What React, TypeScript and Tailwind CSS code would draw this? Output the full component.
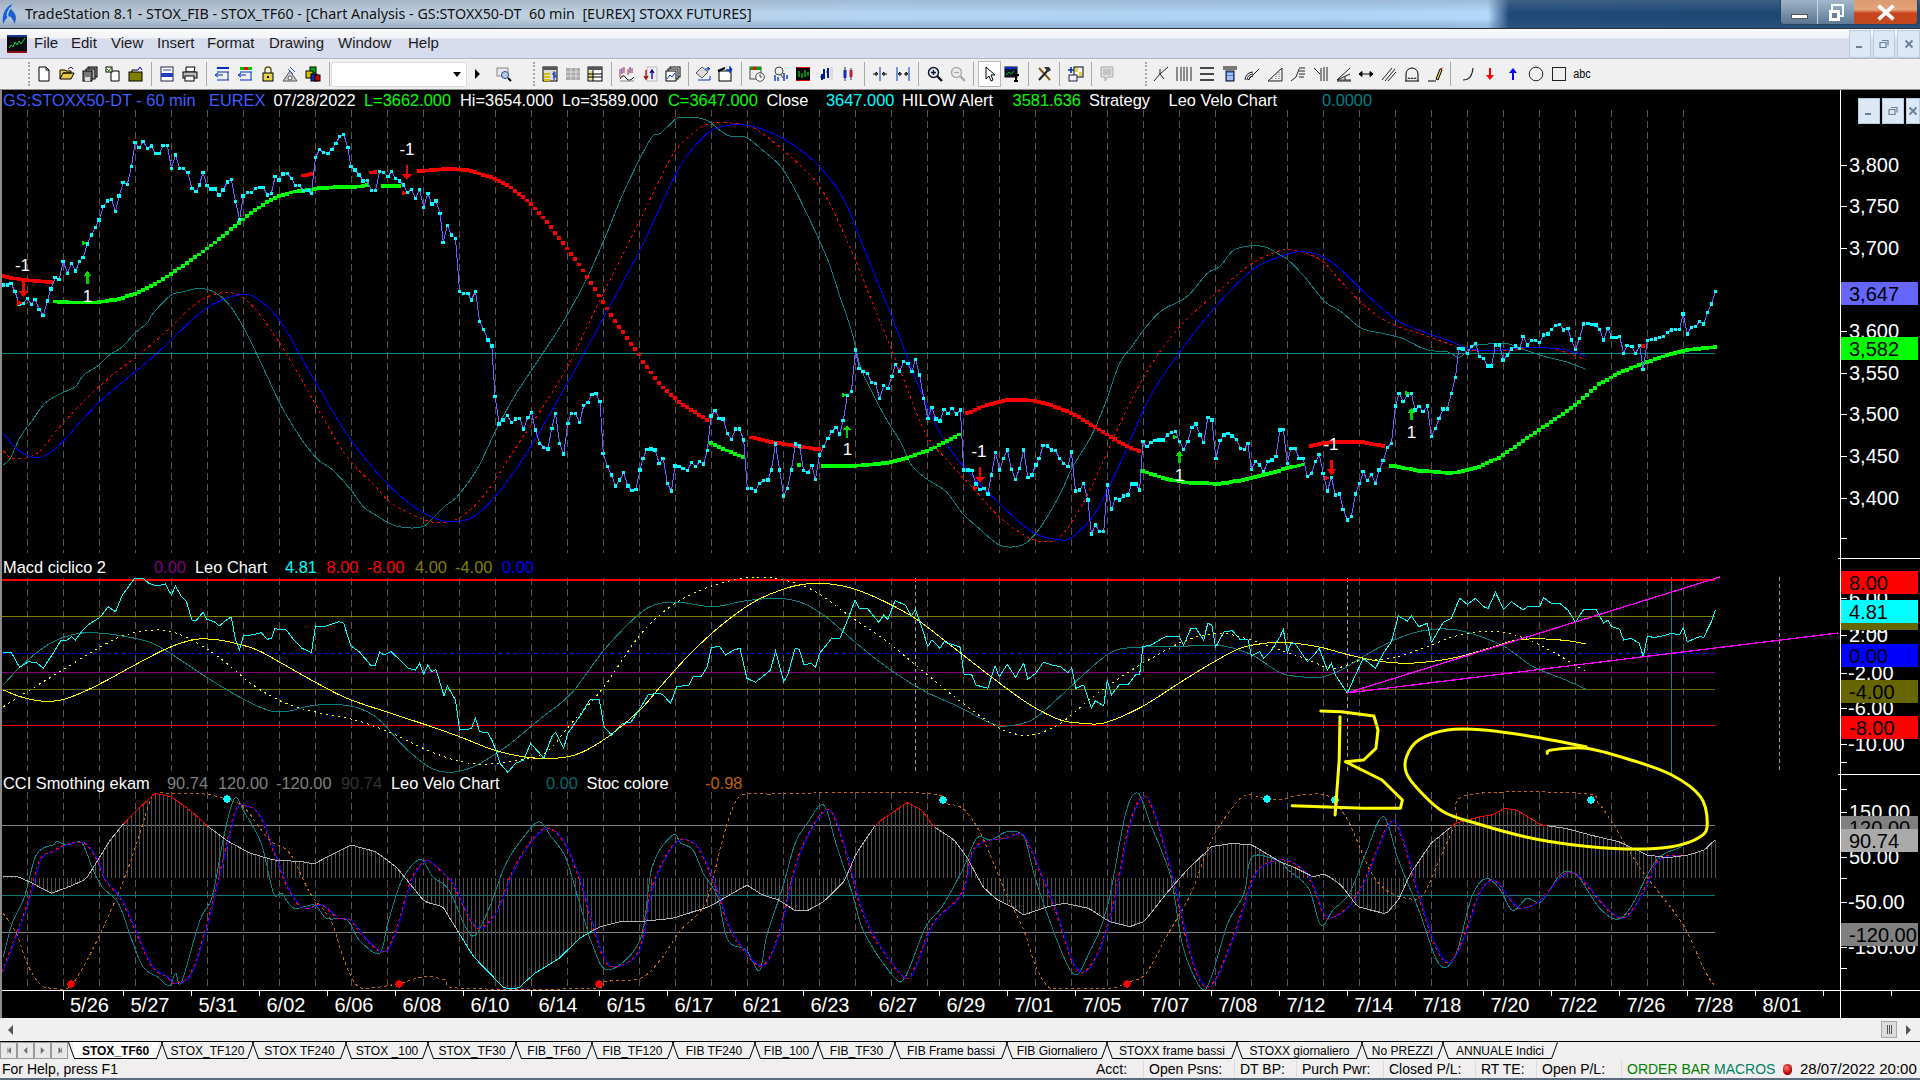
import React from "react";

type Pt = [number, number];
const P = (ox: number, oy: number, s: string): Pt[] =>
  s.trim().split(/\s+/).map((p) => {
    const [a, b] = p.split(",").map(Number);
    return [ox + a / 2.45, oy + b / 3] as Pt;
  });
const L = (pts: Pt[]) => pts.map((p) => p[0].toFixed(1) + "," + p[1].toFixed(1)).join(" ");
const smooth = (pts: Pt[]) => {
  let d = `M${pts[0][0].toFixed(1)} ${pts[0][1].toFixed(1)}`;
  for (let i = 0; i < pts.length - 1; i++) {
    const p0 = pts[Math.max(0, i - 1)], p1 = pts[i], p2 = pts[i + 1], p3 = pts[Math.min(pts.length - 1, i + 2)];
    const c1x = p1[0] + (p2[0] - p0[0]) / 6, c1y = p1[1] + (p2[1] - p0[1]) / 6;
    const c2x = p2[0] - (p3[0] - p1[0]) / 6, c2y = p2[1] - (p3[1] - p1[1]) / 6;
    d += `C${c1x.toFixed(1)} ${c1y.toFixed(1)} ${c2x.toFixed(1)} ${c2y.toFixed(1)} ${p2[0].toFixed(1)} ${p2[1].toFixed(1)}`;
  }
  return d;
};
const interp = (pts: Pt[], x: number) => {
  if (x <= pts[0][0]) return pts[0][1];
  for (let i = 0; i < pts.length - 1; i++) {
    if (x <= pts[i + 1][0]) {
      const t = (x - pts[i][0]) / Math.max(0.001, pts[i + 1][0] - pts[i][0]);
      return pts[i][1] + (pts[i + 1][1] - pts[i][1]) * t;
    }
  }
  return pts[pts.length - 1][1];
};
const grid = (x: number) => 3.3 + 4 * Math.ceil((x - 3.3) / 4);
const squares = (keys: Pt[]) => {
  const out: Pt[] = [];
  const end = keys[keys.length - 1][0];
  for (let x = grid(keys[0][0]); x <= end + 0.5; x += 4) out.push([x, interp(keys, x)]);
  return out;
};

const price: Pt[] = [
  ...P(0, 120, "8,495 18,495 27,490 37,515 47,553 57,550 67,535 77,554 86,538 96,568 106,586 116,543 125,507 135,473 145,478 155,424 165,460 175,430 185,453 195,425 204,412 214,372 224,345 234,322 243,300 253,260 263,243 273,238 283,274 292,228 302,188 312,194 322,140 331,68 341,82 351,65 361,85 371,78 381,100 390,100 400,76 410,76 420,145 430,105 440,145 450,145 460,158 470,205 480,215 489,195 497,157 507,197 517,207 527,207 537,225 547,210 557,186 567,178 577,245 587,298 596,228 606,218 616,218 626,205 636,202 645,202 655,225 665,220 674,170 684,180 694,162 704,160 714,175 724,197 734,197 744,212 754,212 763,220 773,113 783,88 793,98 803,100 813,88 823,70 832,50 842,43 852,82 860,140 870,150 880,165 890,183 900,182 910,212 920,212 930,155 940,157 950,170 959,155 969,175 979,183 989,195 998,218 1008,209 1018,235 1028,209 1038,262 1048,220 1058,252 1068,243 1078,280 1086,367 1096,316 1106,345 1116,355 1126,515 1136,520 1146,520 1155,540 1165,514 1175,604 1185,628 1195,660 1205,678 1213,830 1223,912 1233,900 1243,887 1253,907 1263,897 1273,895 1283,927 1293,892 1302,878 1312,930 1322,970 1332,982 1342,987 1352,925 1361,880 1371,970 1381,1002 1391,910 1400,880 1410,880 1420,907 1430,857 1440,848 1450,823 1460,820 1470,845 1478,1000 1488,1040 1498,1065 1508,1098 1518,1080 1528,1058 1538,1098 1548,1112 1558,1108"),
  ...P(640, 120, "0,1050 7,1015 17,988 27,987 37,990 47,1030 57,1015 67,1090 77,1113 86,1038 96,1040 106,1045 116,1052 126,1028 136,1040 146,1025 156,1032 165,992 174,888 184,872 194,895 204,897 214,940 224,958 234,927 244,927 254,960 263,1105 273,1105 283,1113 293,1090 303,1082 313,1080 322,1050 332,972 342,1050 352,1128 361,1105 371,1050 381,972 391,978 401,1052 411,1058 421,1037 430,1078 440,1005 450,980 460,955 470,935 480,922 489,942 498,902 508,827 518,815 528,690 537,745 547,755 557,760 567,788 577,790 587,835 597,797 607,805 617,770 626,733 636,755 646,725 656,730 666,755 675,718 685,765 695,835 705,895 715,862 725,897 735,903 745,868 755,880 765,866 775,882 785,870 793,1050 803,1050 813,1052 823,1092 833,1108 843,1105 852,1122 861,1065 871,998 881,1050 891,1015 900,990 910,1048 920,1078 930,1045 940,990 950,1072 960,1065 970,1035 978,1015 988,976 998,978 1008,990 1018,992 1028,1015 1038,1030 1048,1040 1057,996 1067,1113 1077,1110 1087,1090 1097,1140 1106,1242 1116,1215 1126,1235 1136,1235 1145,1095 1155,1167 1165,1135 1175,1140 1185,1128 1195,1125 1205,1092 1215,1092 1224,1110 1232,965 1242,980 1252,968 1262,962 1272,960 1282,960 1292,945 1302,938 1312,935 1322,965 1332,988 1342,965 1352,922 1362,912 1372,945 1381,968 1391,893 1401,900 1411,1015 1421,962 1431,945 1441,940 1451,948 1461,958 1471,985 1481,988 1489,970 1498,1048 1508,1025 1518,1035 1528,1055 1538,1025 1548,1020 1558,1010"),
  ...P(1280, 120, "0,930 8,928 18,1030 27,985 37,985 47,1015 57,1015 67,1070 77,1060 87,1025 96,1003 106,1060 116,1113 126,1073 136,1125 146,1122 155,1168 165,1200 175,1190 185,1122 195,1090 204,1055 214,1082 224,1063 234,1090 243,1050 253,1022 263,982 273,970 283,858 292,820 302,845 312,825 322,820 331,870 341,860 351,875 361,858 371,950 381,925 390,895 400,867 410,867 420,820 430,772 438,685 448,687 459,700 469,680 479,670 489,710 499,715 509,738 518,738 528,675 538,675 547,720 557,705 567,687 577,678 587,685 596,650 606,675 616,662 626,662 636,668 646,645 656,642 665,628 675,617 685,613 695,630 705,625 714,660 724,688 734,655 744,612 754,610 764,613 774,615 783,628 793,660 803,625 813,652 823,652 832,650 842,700 850,677 862,680 871,700 881,677 890,748 900,662 910,658 920,657 930,652 940,650 949,637 959,630 969,628 979,628 988,582 998,642 1008,622 1018,620 1028,605 1038,612 1047,578 1057,552 1067,515"),
];

const redStops: Pt[][] = [
  P(0, 120, "8,468 27,474 57,480 97,484 127,486"),
  P(0, 120, "742,167 765,163"),
  P(0, 120, "905,158 925,157"),
  [...P(0, 120, "1018,155 1060,150 1110,147 1150,152 1200,170 1250,200 1300,250 1340,305 1380,370 1420,435 1460,510 1500,590 1540,660 1567,705"), ...P(640, 120, "0,712 50,795 100,850 165,900")],
  P(640, 120, "263,950 300,960 350,972 395,980 440,988"),
  P(640, 120, "793,885 850,855 900,840 950,840 1000,852 1060,880 1120,925 1180,970 1225,995"),
  P(1280, 120, "67,982 100,970 150,965 200,966 260,980"),
  P(1280, 120, "887,678 893,678"),
];
const greenStops: Pt[][] = [
  P(0, 120, "135,545 175,548 235,548 290,538 330,522 370,500 420,462 470,420 520,375 570,325 620,275 670,235 720,215 765,210 780,204 880,200 903,195"),
  P(0, 120, "930,198 985,198"),
  P(640, 120, "174,970 210,990 254,1012"),
  P(640, 120, "381,1035 391,1035"),
  P(640, 120, "448,1038 540,1037 600,1030 660,1012 720,985 785,942"),
  [...P(640, 120, "1232,1053 1290,1077 1340,1088 1420,1092 1480,1080 1567,1052"), ...P(1280, 120, "2,1050 60,1033")],
  P(1280, 120, "272,1037 340,1052 420,1060 480,1045 540,1012 600,960 660,910 720,860 780,795 830,760 880,735 950,705 1010,688 1067,682"),
];

const tealMA: Pt[] = [
  ...P(0, 120, "8,1035 25,1015 50,950 80,900 110,850 150,820 185,800 205,765 240,737 270,703 300,680 330,640 360,610 375,580 420,525 450,515 490,505 530,520 565,560 600,630 640,730 690,860 740,960 780,1020 815,1050 860,1110 890,1160 920,1185 970,1218 1030,1222 1060,1195 1090,1158 1120,1130 1170,1045 1215,930 1265,820 1330,700 1385,595 1440,470 1490,330 1525,225"),
  ...P(640, 120, "0,115 30,50 50,40 85,0 100,-8 150,-5 175,10 200,35 225,50 260,52 300,90 345,140 380,210 420,310 460,420 490,530 520,640 540,740 570,820 600,890 640,970 665,1035 700,1075 750,1115 790,1180 830,1225 880,1275 920,1280 950,1265 985,1215 1030,1120 1060,1040 1105,950 1140,850 1175,730 1205,680 1240,620 1280,570 1340,530 1390,460 1420,440 1450,395 1480,380 1530,380"),
  ...P(1280, 120, "0,405 20,420 60,470 110,545 150,575 200,625 250,640 300,655 340,680 370,692 410,695 440,712 470,680 510,672 560,672 600,690 650,710 700,725 750,748"),
];
const redMA: Pt[] = [
  ...P(0, 120, "8,992 30,1015 70,1012 100,990 140,930 200,850 270,770 340,705 420,620 470,560 520,525 570,520 620,560 680,660 730,760 790,890 850,1010 920,1100 960,1150 1030,1195 1080,1208 1130,1190 1190,1120 1260,990 1320,880 1390,740 1470,540"),
  ...P(640, 120, "0,300 40,200 85,95 140,30 175,10 230,10 280,25 350,90 440,200 510,370 580,580 640,760 700,940 760,1030 820,1110 880,1190 940,1245 985,1265 1030,1250 1090,1140 1140,1010 1200,850 1260,720 1330,610 1420,510 1500,430"),
  ...P(1280, 120, "0,392 40,392 100,420 150,485 210,560 270,610 340,640 410,670 460,690 560,692 620,682 680,690 750,720"),
];
const blueMA: Pt[] = [
  ...P(0, 120, "8,940 40,985 70,1008 105,1010 150,970 240,850 380,705 500,570 590,523 640,545 690,610 770,780 860,960 960,1105 1040,1180 1100,1205 1160,1190 1220,1120 1300,980 1390,790 1480,590"),
  ...P(640, 120, "0,390 50,260 100,135 160,45 200,20 250,14 300,28 370,70 440,140 500,240 560,420 620,600 680,790 740,950 800,1050 880,1150 960,1235 1020,1258 1060,1250 1120,1170 1180,1020 1250,830 1320,700 1410,560 1500,450"),
  ...P(1280, 120, "0,410 50,395 105,410 150,450 200,510 280,595 340,630 420,665 460,685 520,692 600,683 650,683 700,690 750,708"),
];

const macdCyan: Pt[] = [
  ...P(0, 560, "8,278 28,278 48,322 70,305 90,308 106,325 130,280 150,240 165,240 175,230 185,240 200,215 215,195 245,172 265,140 283,155 300,105 330,55 350,55 365,70 385,78 405,72 420,105 430,78 445,110 457,125 470,180 480,183 497,157 507,178 525,185 537,198 560,175 567,172 577,240 587,270 596,228 616,225 640,218 655,238 665,235 674,205 684,210 700,208 720,240 740,265 763,278 773,198 793,200 830,185 842,190 860,258 880,275 910,318 920,315 930,275 940,285 958,275 980,300 1000,325 1018,330 1028,310 1038,343 1048,315 1058,335 1068,328 1088,408 1096,378 1116,420 1126,510 1146,508 1155,505 1165,475 1175,515 1195,518 1205,540 1215,570 1225,610 1244,637 1263,610 1283,600 1300,550 1322,580 1332,595 1352,530 1361,517 1381,565 1391,520 1420,470 1445,420 1468,418 1480,500 1498,525 1525,490 1545,488"),
  ...P(640, 560, "0,445 20,405 40,400 55,403 75,430 90,380 120,375 130,350 150,350 165,320 175,262 195,260 210,285 230,270 245,265 262,355 283,367 320,330 332,272 352,365 362,345 380,265 390,268 402,315 420,310 430,322 440,280 470,235 490,235 510,175 527,120 537,145 557,145 570,165 585,187 597,165 607,178 625,122 650,135 665,168 675,148 695,220 705,260 715,240 735,265 745,245 785,262 793,342 813,345 823,375 852,385 870,318 880,350 900,313 920,352 940,310 950,358 970,340 988,307 1010,315 1030,320 1048,338 1058,323 1068,385 1087,375 1106,445 1116,422 1136,438 1145,360 1155,405 1175,373 1195,375 1215,343 1224,345 1232,260 1252,255 1290,228 1320,228 1332,255 1350,205 1362,205 1381,240 1391,190 1401,195 1410,262 1431,215 1451,212 1470,238 1490,240 1498,288 1518,275 1528,295 1548,270"),
  ...P(1280, 560, "0,230 8,208 18,278 27,250 37,250 67,305 87,280 96,265 116,330 126,310 136,345 165,400 185,345 204,295 224,315 234,325 253,280 273,245 290,168 312,183 322,168 340,200 361,190 371,248 400,187 420,175 440,115 459,133 479,115 499,140 510,145 528,97 548,148 567,125 596,150 606,140 636,140 646,113 665,130 685,130 705,150 724,187 744,148 774,148 793,190 803,180 813,200 832,208 842,240 860,235 880,250 890,290 900,230 920,232 940,227 958,220 979,225 988,203 998,245 1028,230 1038,232 1057,185 1067,150"),
];
const macdYellow: Pt[] = [
  ...P(0, 560, "8,390 50,410 100,423 150,420 200,398 260,362 330,315 410,265 470,240 510,237 560,245 630,270 690,310 770,365 850,415 950,457 1050,497 1130,532 1210,570 1290,592 1360,595 1420,580 1490,530"),
  ...P(640, 560, "0,450 50,380 120,285 200,195 280,125 350,88 400,73 450,70 520,85 600,125 680,180 760,255 860,350 950,430 1030,480 1090,490 1140,488 1230,440 1320,370 1400,310 1470,265 1530,250"),
  ...P(1280, 560, "0,247 40,250 100,262 170,285 240,303 310,310 380,303 440,290 520,262 580,240 650,237 710,243 750,252"),
];
const macdDot: Pt[] = [
  ...P(0, 560, "8,440 80,385 160,325 240,265 300,228 360,212 410,212 470,240 540,295 620,375 700,430 780,458 870,480 960,520 1050,572 1130,605 1200,612 1280,598 1340,575 1400,490 1480,380"),
  ...P(640, 560, "0,225 80,135 160,85 240,57 300,52 360,62 430,95 510,165 600,240 690,330 770,410 860,490 920,522 970,522 1030,490 1100,420 1180,350 1260,290 1340,240 1420,220 1490,238"),
  ...P(1280, 560, "0,270 60,295 130,325 200,300 270,295 350,265 440,225 530,215 600,235 660,270 710,305 750,335"),
];
const macdTeal: Pt[] = [
  ...P(0, 560, "8,375 50,320 110,260 160,230 220,218 300,228 370,248 430,290 510,355 600,420 660,452 700,455 760,438 820,433 880,445 930,480 990,560 1050,620 1100,637 1160,620 1240,560 1320,480 1400,400 1480,270"),
  ...P(640, 560, "0,160 50,130 100,127 180,140 260,122 340,115 400,130 460,175 540,260 620,335 700,395 780,440 860,490 900,498 960,480 1020,420 1090,340 1150,280 1200,263 1300,260 1370,257 1430,258 1500,285"),
  ...P(1280, 560, "0,338 50,350 100,352 150,330 210,285 280,240 350,212 420,208 480,225 550,260 620,320 700,360 750,388"),
];

const orange: Pt[] = [
  ...P(0, 560, "8,1060 40,1120 70,1220 100,1275 130,1285 165,1285 200,1230 250,1110 300,970 340,830 370,715 385,700 420,700 500,702 560,720 600,745 660,840 710,880 760,1000 810,1080 840,1190 870,1270 900,1285 980,1270 1040,1250 1090,1260 1130,1285 1450,1285 1480,1265"),
  ...P(640, 560, "0,1255 50,1200 100,1110 160,1030 200,850 225,750 250,705 300,700 320,705 350,700 700,700 750,730 790,745 830,810 870,920 900,1010 940,1110 970,1220 1000,1280 1030,1285 1150,1285 1200,1265 1240,1240 1290,1130 1350,1000 1400,840 1460,730 1490,705 1530,715"),
  ...P(1280, 560, "0,718 50,705 100,703 130,720 170,790 220,930 260,990 310,1015 350,1005 390,900 430,790 460,705 740,700 780,730 820,800 880,920 930,1000 990,1100 1040,1230 1065,1278"),
];
const cciGray: Pt[] = [
  ...P(0, 560, "8,948 40,948 80,970 125,1000 170,980 210,958 240,900 270,840 300,795 340,745 380,700 420,710 470,755 510,800 560,845 610,878 670,900 740,905 770,912 810,885 860,855 920,875 970,920 1000,965 1040,1025 1085,1040 1120,1110 1160,1190 1200,1240 1235,1285 1270,1285 1310,1240 1370,1195 1420,1135 1470,1100 1520,1085"),
  ...P(640, 560, "0,1085 80,1075 170,1040 262,975 300,1005 340,1020 380,1052 410,1052 450,1025 500,965 530,880 580,790 655,727 690,750 720,800 770,840 800,890 840,980 870,1015 910,1040 940,1065 1000,1040 1040,1030 1100,1045 1150,1085 1200,1100 1235,1085 1290,1000 1340,930 1400,860 1450,850 1500,855"),
  ...P(1280, 560, "0,905 40,925 80,950 110,942 150,975 190,1040 260,1062 290,1020 320,940 370,850 430,790 490,770 520,765 550,745 580,750 640,795 700,805 760,825 830,845 900,885 950,893 1000,885 1040,870 1067,838"),
];
const ccBlue: Pt[] = [
  ...P(0, 560, "8,1235 40,1130 70,1030 100,900 130,875 170,852 210,850 240,900 260,960 300,1020 340,1130 375,1220 410,1250 430,1270 470,1240 510,1090 545,920 580,750 610,740 640,770 680,900 710,990 745,1045 790,1035 830,1075 860,1080 900,1140 945,1175 975,1100 1010,960 1040,905 1060,910 1110,970 1150,1070 1180,1105 1220,1050 1260,930 1300,850 1340,805 1380,840 1420,950 1450,1080 1480,1190 1510,1220"),
  ...P(640, 560, "0,1170 30,990 65,890 100,840 145,865 190,990 220,1100 250,1160 300,1218 340,1130 380,930 420,810 465,750 500,850 540,1030 580,1140 650,1253 680,1210 720,1090 790,1000 815,880 845,845 900,835 940,825 980,930 1020,1050 1070,1225 1115,1200 1160,1040 1200,800 1235,710 1265,770 1310,970 1350,1180 1385,1278 1420,1240 1470,1080 1510,940"),
  ...P(1280, 560, "0,900 50,920 80,970 110,1065 130,1072 170,1040 210,960 270,790 300,830 340,1000 380,1150 415,1208 450,1140 490,1000 525,960 560,1010 590,1045 640,1020 690,950 725,940 770,1000 815,1060 850,1070 890,1000 930,900 985,885"),
];
const ccTeal: Pt[] = [
  ...P(0, 560, "8,1190 30,1090 60,1010 85,895 105,865 130,855 140,845 165,855 200,848 225,920 250,980 290,1030 320,1130 350,1220 385,1250 415,1278 430,1240 445,1265 490,1080 520,1010 550,820 575,715 600,760 640,850 670,1000 690,1000 720,1045 770,1035 800,1075 850,1080 880,1140 930,1180 950,1090 985,960 1030,898 1060,950 1100,990 1140,1100 1165,1125 1200,1040 1240,910 1290,820 1322,785 1350,830 1385,890 1420,1030 1450,1150 1490,1230"),
  ...P(640, 560, "0,1140 30,920 80,825 100,850 130,870 155,940 190,1010 215,1140 260,1170 293,1232 310,1130 350,980 380,850 410,790 450,735 480,850 520,1000 550,1120 620,1248 650,1250 700,1100 740,1040 790,930 825,835 860,840 900,815 940,830 965,940 1000,1070 1060,1240 1100,1180 1145,1040 1190,760 1220,700 1250,790 1300,950 1330,1160 1375,1285 1400,1250 1440,1090 1480,1000 1500,890"),
  ...P(1280, 560, "0,905 20,930 70,985 100,1095 130,1050 170,1000 210,880 253,770 290,900 340,1050 390,1213 430,1185 470,1010 505,955 540,990 570,1052 605,1015 640,1025 690,940 730,950 780,1040 825,1078 860,1040 900,945 930,890 985,860"),
];
const R1 = P(1280, 560, "100,453 150,455 230,468 240,510 235,565 205,600 160,605 250,660 300,720 295,745 205,745 30,737");
const R2 = P(1280, 560, "147,470 145,600 135,765");
const R3 = P(1280, 560, "655,580 665,570 750,565 860,600 960,645 1030,710 1047,790 1030,830 960,860 850,867 720,855 600,830 480,790 400,755 340,690 310,640 310,590 340,540 410,510 500,510 620,530 750,560");

const vGrid: number[] = Array.from({ length: 47 }, (_, k) => 27.4 + 36 * k);
const hist: Pt[] = (() => {
  const o: Pt[] = [];
  for (let x = 3.3; x <= 1716; x += 4) o.push([x, interp(cciGray, x)]);
  return o;
})();
const cciSegs = (() => {
  const segs: { c: string; pts: Pt[] }[] = [];
  const col = (y: number) => (y < 825.7 ? "#ff0000" : y > 932 ? "#00ffff" : "#b4b4b4");
  for (let i = 0; i < hist.length - 1; i++) {
    const c = col((hist[i][1] + hist[i + 1][1]) / 2);
    const last = segs[segs.length - 1];
    if (last && last.c === c) last.pts.push(hist[i + 1]);
    else segs.push({ c, pts: [hist[i], hist[i + 1]] });
  }
  return segs;
})();

const DownA = ({ x, y1, y2 }: { x: number; y1: number; y2: number }) => (
  <g>
    <line x1={x} x2={x} y1={y1} y2={y2 - 4} stroke="#ff0000" strokeWidth={2.6} />
    <polygon points={`${x - 5},${y2 - 6} ${x + 5},${y2 - 6} ${x},${y2}`} fill="#ff0000" />
  </g>
);
const UpA = ({ x, y1, y2 }: { x: number; y1: number; y2: number }) => (
  <g>
    <line x1={x} x2={x} y1={y1} y2={y2 + 4} stroke="#00d000" strokeWidth={2.4} />
    <polygon points={`${x - 4},${y2 + 5} ${x + 4},${y2 + 5} ${x},${y2}`} fill="#00e000" />
  </g>
);
const Tri = ({ x, y, c }: { x: number; y: number; c: string }) => (
  <polygon points={`${x - 2.5},${y - 3} ${x + 3},${y} ${x - 2.5},${y + 3}`} fill={c} />
);
const Num = ({ x, y, t }: { x: number; y: number; t: string }) => (
  <text x={x} y={y + 6} textAnchor="middle" fontSize={17} fill="#fff">{t}</text>
);

const axisLabels: [number, string][] = [
  [165, "3,800"], [206, "3,750"], [248, "3,700"], [331, "3,600"], [373, "3,550"], [414, "3,500"], [456, "3,450"], [498, "3,400"],
  [598, "6.00"], [626, "4.00"], [635, "2.00"], [673, "-2.00"], [708, "-6.00"], [744, "-10.00"],
  [812, "150.00"], [857, "50.00"], [902, "-50.00"], [947, "-150.00"],
];
const axisTicks = [165, 206, 248, 290, 331, 373, 414, 456, 498, 538, 598, 635, 673, 708, 744, 762, 789, 812, 857, 878, 902, 947, 968];
const boxes: [number, string, string][] = [
  [282, "#6666ff", "3,647"], [337, "#00ff00", "3,582"], [571, "#ff0000", "8.00"], [607, "#666600", ""], [600, "#00ffff", "4.81"], [644, "#0000ff", "0.00"], [680, "#666600", "-4.00"], [716, "#ff0000", "-8.00"],
  [816, "#808080", "120.00"], [829, "#aaaaaa", "90.74"], [923, "#808080", "-120.00"],
];

function ChartSvg() {
  return (
    <svg viewBox="0 89 1920 929" className="absolute inset-0 w-[1920px] h-[929px]" shapeRendering="crispEdges">
      <g stroke="#565656" strokeDasharray="7 4">
        {vGrid.map((x) => <line key={"a" + x} x1={x} x2={x} y1={110} y2={553} />)}
        {vGrid.map((x) => <line key={"b" + x} x1={x} x2={x} y1={578} y2={771} />)}
        {vGrid.map((x) => <line key={"c" + x} x1={x} x2={x} y1={792} y2={988} />)}
      </g>
      <g stroke="#9a9a9a" strokeDasharray="4 3">
        <line x1={915.5} x2={915.5} y1={578} y2={771} />
        <line x1={1347.5} x2={1347.5} y1={578} y2={771} />
        <line x1={1779.5} x2={1779.5} y1={577} y2={770} />
      </g>
      <line x1={1671.5} x2={1671.5} y1={577} y2={775} stroke="#0a8a8a" />
      <g fill="none">
        <line x1={2} x2={1715} y1={353.5} y2={353.5} stroke="#0a8a8a" />
        <line x1={2} x2={1715} y1={580} y2={580} stroke="#ff0000" strokeWidth={2} />
        <line x1={2} x2={1715} y1={616.5} y2={616.5} stroke="#808000" />
        <line x1={2} x2={1715} y1={653.5} y2={653.5} stroke="#0000ff" strokeDasharray="4 3" />
        <line x1={2} x2={1715} y1={672.5} y2={672.5} stroke="#800080" />
        <line x1={2} x2={1715} y1={689.5} y2={689.5} stroke="#666600" />
        <line x1={2} x2={1715} y1={725.5} y2={725.5} stroke="#ff0000" />
        <line x1={2} x2={1715} y1={825.5} y2={825.5} stroke="#808080" />
        <line x1={2} x2={1715} y1={895.5} y2={895.5} stroke="#0a7a7a" />
        <line x1={2} x2={1715} y1={932.5} y2={932.5} stroke="#808080" />
      </g>
      <path d={smooth(tealMA)} fill="none" stroke="#0a8080" />
      <path d={smooth(redMA)} fill="none" stroke="#ff0000" strokeDasharray="3 3" />
      <path d={smooth(blueMA)} fill="none" stroke="#0000ff" />
      {redStops.map((k, i) => squares(k).map((p, j) => <rect key={`r${i}-${j}`} x={p[0] - 2} y={p[1] - 2} width={4} height={3.8} fill="#ff0000" />))}
      {greenStops.map((k, i) => squares(k).map((p, j) => <rect key={`g${i}-${j}`} x={p[0] - 2} y={p[1] - 2} width={4} height={3.8} fill="#00ff00" />))}
      <polyline points={L(price)} fill="none" stroke="#6666ff" strokeWidth={1} />
      {price.map((p, i) => <rect key={"p" + i} x={p[0] - 1.8} y={p[1] - 1.7} width={3.6} height={3.4} fill="#00ffff" />)}
      <Num x={22.5} y={265} t="-1" /><DownA x={23.5} y1={279} y2={297} /><Tri x={19.5} y={303} c="#ff0000" />
      <UpA x={87.5} y1={284} y2={271} /><Num x={87.5} y={296} t="1" /><Tri x={84} y={243} c="#00e000" />
      <Num x={407} y={149} t="-1" /><DownA x={407} y1={165} y2={180} /><Tri x={404} y={193} c="#ff0000" />
      <Tri x={844} y={395} c="#00e000" /><UpA x={847} y1={438} y2={425} /><Num x={847.5} y={449} t="1" />
      <Num x={979} y={451} t="-1" /><DownA x={980} y1={467} y2={483} /><Tri x={975} y={488} c="#ff0000" />
      <Tri x={1175} y={437} c="#00e000" /><UpA x={1179.5} y1={463} y2={451} /><Num x={1179.5} y={475} t="1" />
      <Num x={1331} y={444} t="-1" /><DownA x={1331.5} y1={460} y2={475} /><Tri x={1327} y={478} c="#ff0000" />
      <Tri x={1407} y={393} c="#00e000" /><UpA x={1411.5} y1={420} y2={408} /><Num x={1411.5} y={432} t="1" />

      <path d={smooth(macdTeal)} fill="none" stroke="#0a8080" />
      <path d={smooth(macdDot)} fill="none" stroke="#ffff00" strokeDasharray="2 4" />
      <path d={smooth(macdYellow)} fill="none" stroke="#ffff00" />
      <polyline points={L(macdCyan)} fill="none" stroke="#00ffff" />
      <line x1={1347} y1={693} x2={1720} y2={577} stroke="#ff00ff" strokeWidth={1.3} />
      <line x1={1347} y1={693} x2={1838} y2={633} stroke="#ff00ff" strokeWidth={1.3} />

      <g stroke="#4e4e4e">
        {hist.map((p, i) => <line key={"h" + i} x1={p[0]} x2={p[0]} y1={p[1]} y2={878} />)}
      </g>
      <path d={smooth(orange)} fill="none" stroke="#c8680c" strokeDasharray="3 3" />
      <path d={smooth(ccTeal)} fill="none" stroke="#0a8080" />
      <path d={smooth(ccBlue)} fill="none" stroke="#0000ff" />
      <path d={smooth(ccBlue.map((p) => [p[0] - 1.2, p[1]] as Pt))} fill="none" stroke="#ff0000" strokeDasharray="3 3" />
      {cciSegs.map((s, i) => <polyline key={"s" + i} points={L(s.pts)} fill="none" stroke={s.c} />)}
      {[[227, 799], [943, 800], [1267, 799], [1335, 800], [1591, 800]].map(([x, y]) => <circle key={x} cx={x} cy={y} r={3.6} fill="#00ffff" />)}
      {[[71, 984], [399, 984], [599, 984], [1127, 984]].map(([x, y]) => <circle key={x} cx={x} cy={y} r={3.6} fill="#ff0000" />)}

      <g fill="none" stroke="#ffff00" strokeWidth={3} strokeLinecap="round" strokeLinejoin="round" shapeRendering="geometricPrecision">
        <polyline points={L(R1)} />
        <polyline points={L(R2)} />
        <path d={smooth(R3)} />
      </g>

      <g stroke="#fff">
        <line x1={1840.5} x2={1840.5} y1={89} y2={1018} />
        <line x1={1838} x2={1920} y1={558.5} y2={558.5} />
        <line x1={1838} x2={1920} y1={774.5} y2={774.5} />
        <line x1={2} x2={1920} y1={990.5} y2={990.5} />
        {axisTicks.map((y) => <line key={"t" + y} x1={1841} x2={1847} y1={y + 0.5} y2={y + 0.5} />)}
        <line x1={63.5} x2={63.5} y1={990} y2={1000} />
        {Array.from({ length: 27 }, (_, i) => 123.5 + 68 * i).map((x) => <line key={"x" + x} x1={x} x2={x} y1={990} y2={996} />)}
      </g>
      {axisLabels.map(([y, t]) => <text key={t} x={t.startsWith("-") ? 1848 : 1849} y={y + 7} fontSize={20} fill="#fff">{t}</text>)}
      {boxes.map(([y, c, t]) => (
        <g key={y}>
          <rect x={1841} y={y} width={77} height={23} fill={c} />
          <text x={1849} y={y + 19} fontSize={20} fill="#000">{t}</text>
        </g>
      ))}
    </svg>
  );
}

const Svg = ({ children }: { children: React.ReactNode }) => <svg viewBox="0 0 16 16" className="w-4 h-4" fill="none">{children}</svg>;
const k = "#000";
const icons: Record<string, React.ReactNode> = {
  doc: <><path d="M3 1h7l3 3v11H3z" fill="#fff" stroke={k} /><path d="M10 1v3h3" stroke={k} /></>,
  open: <><path d="M1 13V4h5l1 1h5v2H4L1 13h11l3-6H4" fill="#e8c848" stroke={k} /><path d="M9 3l3-2 2 2" stroke="#222" /></>,
  saveall: <><rect x="6" y="1" width="9" height="10" fill="#999" stroke={k} /><rect x="4" y="3" width="9" height="10" fill="#aaa" stroke={k} /><rect x="1" y="5" width="9" height="10" fill="#777" stroke={k} /><rect x="3" y="11" width="5" height="4" fill="#ddd" /></>,
  check: <><path d="M6 5h8v10H6z" fill="#fff" stroke={k} /><rect x="1" y="1" width="6" height="5" fill="#ffd" stroke={k} /><path d="M2 3l2 2 2-3" stroke="#080" /></>,
  box: <><rect x="1" y="6" width="13" height="9" fill="#808000" stroke={k} /><path d="M4 6V4h6" stroke={k} /><path d="M12 1l2 3M12 1l-2 3" stroke="#00f" /></>,
  prev: <><rect x="2" y="1" width="12" height="14" fill="#fff" stroke="#224" /><rect x="2" y="7" width="12" height="4" fill="#2040c0" /><path d="M4 4h8" stroke="#2040c0" /></>,
  print: <><path d="M4 1h9l-1 5H4z" fill="#fff" stroke={k} /><rect x="1" y="6" width="14" height="6" fill="#bbb" stroke={k} /><rect x="3" y="10" width="9" height="5" fill="#fff" stroke={k} /></>,
  winA: <><path d="M3 2h12" stroke="#0030c0" strokeWidth="2" /><path d="M3 6h12M3 14h12M14 6v8" stroke="#0030c0" /><path d="M1 9h8M1 9l3-2M1 9l3 2" stroke="#0030c0" /></>,
  winB: <><rect x="3" y="1" width="12" height="3" fill="#00c000" /><rect x="7" y="1" width="4" height="3" fill="#f00" /><path d="M3 6h12M3 14h12M14 6v8" stroke="#0030c0" /><path d="M1 9h8M1 9l3-2M1 9l3 2" stroke="#0030c0" /></>,
  lock: <><path d="M5 7V4a3 3 0 016 0v3" stroke="#665500" strokeWidth="1.4" /><rect x="3" y="7" width="10" height="8" fill="#e8d040" stroke={k} /><rect x="7" y="10" width="2" height="2" fill={k} /></>,
  pyr: <><path d="M1 15L8 5l7 10z" fill="#ccc" stroke="#555" /><path d="M8 1l5 5M6 3l5 5" stroke="#3050d0" /><circle cx="8" cy="12" r="2" fill="#fff" stroke="#555" /></>,
  cubes: <><rect x="5" y="1" width="6" height="6" fill="#00b000" stroke={k} /><rect x="1" y="5" width="7" height="7" fill="#d0c000" stroke={k} /><rect x="6" y="8" width="6" height="7" fill="#0030c0" stroke={k} /><rect x="10" y="9" width="5" height="6" fill="#d00000" stroke={k} /></>,
  mag: <><rect x="1" y="2" width="11" height="8" fill="#e8e8e8" stroke="#888" /><circle cx="9" cy="9" r="3.5" fill="#bcd" stroke="#24a" /><path d="M12 12l3 3" stroke={k} strokeWidth="2" /></>,
  dollar: <><rect x="1" y="1" width="14" height="14" fill="#ddd" stroke={k} /><rect x="1" y="1" width="14" height="3" fill="#555" /><rect x="2" y="7" width="6" height="2" fill="#d8c000" /><rect x="2" y="10" width="6" height="2" fill="#d8c000" /><rect x="2" y="13" width="6" height="2" fill="#d8c000" /><path d="M12 5v9M14 7h-3v2h3v2h-3" stroke="#0030c0" /></>,
  tableG: <><rect x="1" y="2" width="14" height="12" fill="#aaa" /><path d="M1 6h14M1 10h14M6 2v12M11 2v12" stroke="#ddd" /></>,
  table: <><rect x="1" y="1" width="14" height="14" fill="#fff" stroke={k} /><rect x="1" y="1" width="14" height="3" fill="#555" /><rect x="2" y="5" width="4" height="9" fill="#e8e080" /><path d="M1 8h14M1 11h14M6 4v11" stroke={k} /></>,
  wave: <><path d="M1 3v8M5 1v6M9 3v6M13 2v5" stroke="#c02020" /><path d="M3 2v6M11 1v6" stroke="#2020c0" /><path d="M1 13q3-6 6-1t8-1" stroke={k} /><path d="M1 15h14" stroke="#888" /></>,
  arrows: <><rect x="5" y="1" width="10" height="14" fill="#eee" stroke="#bbb" /><path d="M4 4v9M2 10l2 3 2-3" stroke="#a00" strokeWidth="1.3" /><path d="M10 13V4M8 7l2-3 2 3" stroke="#00a" strokeWidth="1.3" /></>,
  stack: <><rect x="5" y="1" width="10" height="10" fill="#fff" stroke={k} /><rect x="3" y="3" width="10" height="10" fill="#fff" stroke={k} /><rect x="1" y="5" width="10" height="10" fill="#fff" stroke={k} /><path d="M2 13l3-4 2 2 3-4" stroke="#0030c0" /></>,
  hatch: <><path d="M1 7l6-6 6 5-6 6z" fill="#ddd" stroke="#555" /><path d="M3 14h12M15 10v4M10 3h5M15 3l-2-2v4" stroke="#0030c0" /></>,
  boxA: <><rect x="2" y="5" width="12" height="10" fill="#fff" stroke={k} /><path d="M1 5l7-3" stroke={k} strokeWidth="2" /><path d="M9 4h6M15 4l-2-3v6" stroke="#0030c0" strokeWidth="1.3" /></>,
  cal: <><rect x="1" y="1" width="11" height="12" fill="#eee" stroke="#444" /><rect x="1" y="1" width="11" height="3" fill="#00a000" /><rect x="4" y="1" width="3" height="3" fill="#f00" /><circle cx="11" cy="11" r="4.3" fill="#fff" stroke="#444" /><path d="M11 8v3h2" stroke="#444" /></>,
  bars: <><circle cx="7" cy="5" r="4" fill="#eee" stroke="#444" /><path d="M9 9l2 3" stroke="#444" /><path d="M3 9v6M6 11v4M12 7v8M15 9v4" stroke="#0030c0" strokeWidth="1.4" /></>,
  blackbars: <><rect x="1" y="1" width="14" height="14" fill={k} /><path d="M1 1.5h14M1 14.5h14" stroke="#d00" /><path d="M4 5v6M7 7v5M10 4v7M13 6v4" stroke="#00d000" strokeWidth="1.3" /></>,
  notes: <><rect x="12" y="1" width="3" height="13" fill="#ddd" /><path d="M4 8v6M6 3v10M10 2v10" stroke="#001c90" strokeWidth="2" /><path d="M2 11h3M8 6h3" stroke="#001c90" /></>,
  candle: <><rect x="1" y="1" width="14" height="14" fill="#eee" /><path d="M5 1v14M11 2v12" stroke="#334" /><rect x="3.5" y="4" width="3" height="8" fill="#1030c0" /><rect x="9.5" y="4" width="3" height="7" fill="#c02040" /></>,
  inward: <><path d="M8 1v14" stroke="#0030c0" /><path d="M1 8h5M6 8L4 6v4M15 8h-5M10 8l2-2v4" stroke={k} /></>,
  outward: <><path d="M2 1v14M14 1v14" stroke="#0030c0" /><path d="M3 8h4M3 8l2-2v4M13 8H9M13 8l-2-2v4" stroke={k} /></>,
  zoomIn: <><circle cx="6.5" cy="6.5" r="5" fill="#dce8f8" stroke="#112" strokeWidth="1.4" /><path d="M4 6.5h5M6.5 4v5" stroke="#112" strokeWidth="1.3" /><path d="M10 10l5 5" stroke="#112" strokeWidth="2.4" /></>,
  zoomOut: <><circle cx="6.5" cy="6.5" r="5" fill="#eee" stroke="#aaa" strokeWidth="1.4" /><path d="M4 6.5h5" stroke="#aaa" strokeWidth="1.3" /><path d="M10 10l5 5" stroke="#aaa" strokeWidth="2.4" /></>,
  cursor: <path d="M5 1v12l3-3 2 5 2-1-2-5h4z" fill="#fff" stroke={k} />,
  chartT: <><rect x="1" y="1" width="12" height="10" fill="#113" stroke={k} /><rect x="1" y="1" width="12" height="2" fill="#0030c0" /><path d="M2 9l3-3 2 2 3-3" stroke="#00c000" /><path d="M9 9h6M12 9v6M10 15h4" stroke={k} strokeWidth="2" /></>,
  tools: <><path d="M3 2l11 12" stroke="#7a5a10" strokeWidth="2" /><path d="M13 3L3 14" stroke="#222" strokeWidth="2" /><path d="M8 1h5l2 3-3 2z" fill="#333" /></>,
  addgrid: <><rect x="6" y="1" width="9" height="10" fill="#fff" stroke={k} /><rect x="7" y="2" width="3" height="4" fill="#e8d040" /><rect x="11" y="6" width="3" height="4" fill="#e8d040" /><path d="M3 1v6M0 4h6" stroke="#0030c0" strokeWidth="1.6" /><rect x="1" y="9" width="8" height="6" fill="#eef" stroke="#224" /></>,
  note: <><path d="M2 1h12v10H9l-3 4v-4H2z" fill="#ddd" stroke="#aaa" /><path d="M4 4h8M4 6h8M4 8h8" stroke="#aaa" /></>,
  ltool: <><path d="M1 15l6-7 8-7" stroke="#222" /><path d="M7 3v5l4 5" stroke="#222" /></>,
  vlines: <path d="M1 1v14M5 1v14M8 1v14M11 1v14M15 1v14" stroke="#222" />,
  hlines: <path d="M1 2h14M1 8h14M1 14h14" stroke="#111" strokeWidth="1.3" />,
  calc: <><path d="M1 1h14M1 3h14" stroke={k} /><rect x="4" y="5" width="8" height="10" fill="#5080e0" stroke="#113" /><path d="M5 8h6M5 11h6M5 13h6" stroke="#fff" /></>,
  speed: <><path d="M1 14a8 8 0 018-8M3 14a6 6 0 016-6M5 14a4 4 0 014-4" stroke="#222" /><path d="M4 14L15 3" stroke="#222" /></>,
  triH: <><path d="M1 15L15 2v13z" stroke="#222" /><path d="M5 15V12M9 15V8M12 15V5" stroke="#666" strokeDasharray="1 1" /></>,
  fib: <><path d="M1 15l5-4 3-8" stroke="#222" /><path d="M9 2h6M9 5h6M9 8h6M9 11h5" stroke="#222" /></>,
  vdiag: <><path d="M8 2v13M11 1v14M14 1v14" stroke="#222" /><path d="M1 2l6 6" stroke="#222" /></>,
  angle: <><path d="M1 14h14M1 15h14M1 14L14 2M1 14l13-6" stroke="#222" /><path d="M9 14v-3" stroke="#222" /></>,
  lr: <path d="M1 8h14M1 8l3-2.5v5zM15 8l-3-2.5v5z" stroke={k} fill={k} strokeWidth="1" />,
  para: <path d="M1 14L11 2M4 15L14 3M7 15L15 6" stroke="#222" />,
  arcs: <><path d="M2 15V8a6 6 0 0112 0v7" stroke={k} /><path d="M4 13a1 1 0 012 0M7 13a1 1 0 012 0M10 13a1 1 0 012 0" stroke={k} /><path d="M1 15h14" stroke={k} /></>,
  pencil: <><path d="M1 15h8" stroke={k} /><path d="M9 13l4-10 2 1-4 10z" fill="#f0d040" stroke={k} /><path d="M13 3l2 1 .5-3z" fill="#d02020" /></>,
  curve: <path d="M3 14q9 0 10-12" stroke="#222" strokeWidth="1.1" />,
  down: <path d="M7 2h2v7h3l-4 5-4-5h3z" fill="#f00" />,
  up: <path d="M7 14h2V7h3L8 2 4 7h3z" fill="#00f" />,
  circle: <circle cx="8" cy="8" r="6.8" stroke="#222" />,
  square: <rect x="1.5" y="1.5" width="13" height="13" stroke="#222" />,
};
const Tool = ({ n, pressed }: { n: string; pressed?: boolean }) => (
  <div className={`w-[22.8px] h-[26px] flex items-center justify-center shrink-0 ${pressed ? "bg-white border border-[#b8b8b8]" : ""}`}>
    <Svg>{icons[n]}</Svg>
  </div>
);
const Sep = () => <div className="w-px h-[24px] bg-[#a8a8a8] mx-1 shrink-0" />;
const Grip = () => <div className="w-[2px] h-[24px] border-l-2 border-dotted border-[#a8a8a8] mx-[3px] shrink-0" />;
const Group = ({ list }: { list: string[] }) => <>{list.map((n) => <Tool key={n} n={n} />)}</>;

function Toolbar() {
  return (
    <div className="h-[31px] bg-[#f0f0f0] border-t border-[#b4b8c0] flex items-center pl-[25px] shrink-0">
      <Grip />
      <Group list={["doc", "open", "saveall", "check", "box"]} /><Sep />
      <Group list={["prev", "print"]} /><Sep />
      <Group list={["winA", "winB", "lock", "pyr", "cubes"]} /><Sep />
      <div className="w-[136px] h-[25px] bg-white border border-[#dcdcdc] rounded-[2px] ml-[-3px] flex items-center justify-end pr-[5px] shrink-0">
        <div className="w-0 h-0 border-x-[4px] border-x-transparent border-t-[5px] border-t-black" />
      </div>
      <div className="w-[20px] flex justify-center shrink-0 ml-[1px]">
        <div className="w-0 h-0 border-y-[5px] border-y-transparent border-l-[5px] border-l-black" />
      </div>
      <div className="ml-[5px]"><Tool n="mag" /></div>
      <div className="w-[15px]" /><Grip />
      <Group list={["dollar", "tableG", "table"]} /><Sep />
      <Group list={["wave", "arrows", "stack"]} /><Sep />
      <div className="-ml-[2px]" />
      <Group list={["hatch", "boxA"]} /><Sep />
      <Group list={["cal", "bars", "blackbars", "notes", "candle"]} /><Sep />
      <Group list={["inward", "outward"]} /><Sep />
      <Group list={["zoomIn", "zoomOut"]} /><Sep />
      <Tool n="cursor" pressed /><Tool n="chartT" /><Sep />
      <Tool n="tools" /><Sep />
      <Tool n="addgrid" /><Sep />
      <Tool n="note" />
      <div className="w-[23px]" /><Grip />
      <Group list={["ltool", "vlines", "hlines", "calc", "speed", "triH", "fib", "vdiag", "angle", "lr", "para", "arcs", "pencil"]} /><Sep />
      <div className="w-px" />
      <Group list={["curve", "down", "up", "circle", "square"]} />
      <div className="w-[24px] text-[12px] text-center text-black font-['Liberation_Sans',sans-serif] shrink-0 scale-x-90">abc</div>
    </div>
  );
}

const MdiBtn = ({ kind, cls }: { kind: "min" | "max" | "x"; cls: string }) => (
  <div className={`bg-[#dde8f6] border border-[#b8cce0] flex items-center justify-center shrink-0 ${cls}`}>
    <svg viewBox="0 0 10 10" className="w-[10px] h-[10px]">
      {kind === "min" && <rect x="1" y="7" width="6" height="2" fill="#6a7f98" />}
      {kind === "max" && <path d="M3 1.5h6v5M1 3.5h6v5H1z" fill="none" stroke="#6a7f98" strokeWidth="1.2" />}
      {kind === "x" && <path d="M1.5 1.5l7 7M8.5 1.5l-7 7" stroke="#6a7f98" strokeWidth="1.8" />}
    </svg>
  </div>
);

function TitleBar() {
  return (
    <div className="relative h-[29px] flex items-center shrink-0 border-b border-[#2a2f38] bg-[linear-gradient(90deg,#b6c4d4_0%,#bfd0e0_30%,#b4d4f2_45%,#aed3f5_70%,#b3d8fa_77.5%,#1f4a78_78.6%,#1c4873_100%)]">
      <div className="absolute inset-0 bg-[linear-gradient(180deg,rgba(120,135,155,.35)_0%,transparent_45%,transparent_65%,rgba(70,100,140,.3)_100%)]" />
      <svg viewBox="0 0 16 20" className="relative w-[18px] h-[22px] ml-[1px] shrink-0">
        <path d="M2 19C0 12 3 4 10 1c-2 3-1 5 1 7 3 3 3 7 1 11-1-4-3-7-5-7-2 1-4 4-5 7z" fill="#1a5fd0" />
        <path d="M6 13c-1-4 1-7 3-9" stroke="#9cc8ff" strokeWidth="1.4" fill="none" />
      </svg>
      <span className="relative ml-[6px] text-[14.3px] text-[#111] whitespace-pre font-['Noto_Sans',sans-serif]">TradeStation 8.1 - STOX_FIB - STOX_TF60 - [Chart Analysis - GS:STOXX50-DT  60 min  [EUREX] STOXX FUTURES]</span>
      <div className="relative ml-auto mr-[2px] mb-[3px] flex h-[25px] w-[138px] rounded-b-[4px] border border-t-0 border-[#28445e] overflow-hidden">
        <div className="w-[37px] flex items-center justify-center bg-[linear-gradient(180deg,#9fb3c8,#5a7590)] border-r border-[#c8d4de]"><div className="w-[17px] h-[5px] bg-white border border-[#555] mt-[8px]" /></div>
        <div className="w-[36px] flex items-center justify-center bg-[linear-gradient(180deg,#a3b8cc,#5d7a96)]">
          <div className="relative w-[15px] h-[17px]"><div className="absolute right-0 top-0 w-[13px] h-[13px] border-2 border-white bg-transparent" /><div className="absolute left-0 bottom-0 w-[11px] h-[11px] border-[3px] border-white bg-[#6a8096]" /></div>
        </div>
        <div className="flex-1 flex items-center justify-center bg-[linear-gradient(180deg,#dd9a6e_0%,#e2a27a_40%,#c9431c_55%,#c24a22_100%)]">
          <svg viewBox="0 0 20 16" className="w-[22px] h-[17px]"><path d="M3 1.5l14 13M17 1.5l-14 13" stroke="#fff" strokeWidth="3.6" /></svg>
        </div>
      </div>
    </div>
  );
}

function MenuBar() {
  const items: [string, string][] = [["File", "w-[37px]"], ["Edit", "w-[40px]"], ["View", "w-[46px]"], ["Insert", "w-[50px]"], ["Format", "w-[62px]"], ["Drawing", "w-[69px]"], ["Window", "w-[70px]"], ["Help", "w-[40px]"]];
  return (
    <div className="h-[29px] flex items-center shrink-0 bg-[linear-gradient(180deg,#fbfbfc_0%,#f2f3f7_30%,#d8dded_35%,#d6dcee_100%)]">
      <svg viewBox="0 0 20 18" className="w-[20px] h-[18px] ml-[7px] shrink-0">
        <rect width="20" height="18" fill="#0a0a14" /><rect y="0" width="20" height="2" fill="#123a90" /><rect y="16" width="20" height="2" fill="#901010" />
        <path d="M2 13l2-3 2 2 2-5 2 3 2-4 2 3 4-6" stroke="#20d040" fill="none" />
      </svg>
      <div className="flex ml-[7px] text-[15px] text-[#1a1a1a] font-['Liberation_Sans',sans-serif]">
        {items.map(([t, w]) => <div key={t} className={w}>{t}</div>)}
      </div>
      <div className="ml-auto flex gap-[2px] h-[28px] items-stretch">
        <MdiBtn kind="min" cls="w-[22px]" /><MdiBtn kind="max" cls="w-[22px]" /><MdiBtn kind="x" cls="w-[23px]" />
      </div>
    </div>
  );
}

const Legend = ({ cls, items }: { cls: string; items: [string, string, string][] }) => (
  <div className={`relative flex items-center pl-[3px] text-[16.4px] whitespace-pre ${cls}`}>
    {items.map(([t, c, w], i) => <span key={i} className={`${c} ${w} shrink-0`}>{t}</span>)}
  </div>
);

const dates = ["5/27", "5/31", "6/02", "6/06", "6/08", "6/10", "6/14", "6/15", "6/17", "6/21", "6/23", "6/27", "6/29", "7/01", "7/05", "7/07", "7/08", "7/12", "7/14", "7/18", "7/20", "7/22", "7/26", "7/28", "8/01"];

function Chart() {
  return (
    <div className="relative h-[929px] bg-black border-t border-[#8a8a8a] border-l-2 border-l-[#8c8c8c] shrink-0 font-['Liberation_Sans',sans-serif] overflow-hidden">
      <div className="absolute left-[-2px] top-[-1px]"><ChartSvg /></div>
      <div className="relative -ml-[2px] flex flex-col h-full -mt-px">
        <div className="h-[469px]">
          <Legend cls="h-[22px]" items={[
            ["GS:STOXX50-DT - 60 min", "text-[#3f5cff]", "w-[206px]"], ["EUREX", "text-[#3f5cff]", "w-[64.5px]"], ["07/28/2022", "text-white", "w-[90.5px]"], ["L=3662.000", "text-[#00ff00]", "w-[96px]"], ["Hi=3654.000", "text-white", "w-[102px]"], ["Lo=3589.000", "text-white", "w-[106px]"], ["C=3647.000", "text-[#00ff00]", "w-[98.5px]"], ["Close", "text-white", "w-[59.5px]"], ["3647.000", "text-[#00ffff]", "w-[76px]"], ["HILOW Alert", "text-white", "w-[110.6px]"], ["3581.636", "text-[#00ff00]", "w-[76.4px]"], ["Strategy", "text-white", "w-[79.6px]"], ["Leo Velo Chart", "text-white", "w-[153.4px]"], ["0.0000", "text-[#008080]", "w-[60px]"],
          ]} />
        </div>
        <div className="h-[216px]">
          <Legend cls="h-[20px]" items={[
            ["Macd ciclico 2", "text-white", "w-[151px]"], ["0.00", "text-[#800080]", "w-[41px]"], ["Leo Chart", "text-white", "w-[90px]"], ["4.81", "text-[#00ffff]", "w-[41.5px]"], ["8.00", "text-[#ff0000]", "w-[40.5px]"], ["-8.00", "text-[#ff0000]", "w-[48px]"], ["4.00", "text-[#808000]", "w-[40px]"], ["-4.00", "text-[#808000]", "w-[47px]"], ["0.00", "text-[#0000ff]", "w-[40px]"],
          ]} />
        </div>
        <div className="h-[216px]">
          <Legend cls="h-[20px]" items={[
            ["CCI Smothing ekam", "text-white", "w-[164px]"], ["90.74", "text-[#808080]", "w-[51px]"], ["120.00", "text-[#808080]", "w-[58px]"], ["-120.00", "text-[#808080]", "w-[65px]"], ["90.74", "text-[#333333]", "w-[50px]"], ["Leo Velo Chart", "text-white", "w-[155px]"], ["0.00", "text-[#006b6b]", "w-[40.5px]"], ["Stoc colore", "text-white", "w-[118.5px]"], ["-0.98", "text-[#c06000]", "w-[50px]"],
          ]} />
        </div>
        <div className="h-[28px] flex items-center pl-[70px] text-[20px] text-white pt-[4px]">
          <span className="w-[60.5px] shrink-0">5/26</span>
          {dates.map((d) => <span key={d} className="w-[68px] shrink-0">{d}</span>)}
        </div>
      </div>
      <div className="absolute right-0 top-[8px] flex gap-[2px]">
        <MdiBtn kind="min" cls="w-[22px] h-[26px]" /><MdiBtn kind="max" cls="w-[22px] h-[26px]" /><MdiBtn kind="x" cls="w-[14px] h-[26px]" />
      </div>
    </div>
  );
}

function ScrollBar() {
  return (
    <div className="h-[23px] bg-[#f0f0f0] flex items-center shrink-0 pl-[8px] pr-[9px]">
      <div className="w-0 h-0 border-y-[5px] border-y-transparent border-r-[5px] border-r-[#555]" />
      <div className="ml-auto w-[16px] h-[17px] bg-[#dcdcdc] border border-[#a8a8a8] flex items-center justify-center gap-[1px]">
        <div className="w-px h-[9px] bg-[#555]" /><div className="w-px h-[9px] bg-[#555]" /><div className="w-px h-[9px] bg-[#555]" />
      </div>
      <div className="ml-[9px] w-0 h-0 border-y-[5px] border-y-transparent border-l-[5px] border-l-[#555]" />
    </div>
  );
}

const tabs: [string, string][] = [["STOX_TF60", "w-[93px]"], ["STOX_TF120", "w-[91px]"], ["STOX TF240", "w-[93px]"], ["STOX _100", "w-[82px]"], ["STOX_TF30", "w-[88px]"], ["FIB_TF60", "w-[76px]"], ["FIB_TF120", "w-[81px]"], ["FIB TF240", "w-[82px]"], ["FIB_100", "w-[63px]"], ["FIB_TF30", "w-[77px]"], ["FIB Frame bassi", "w-[112px]"], ["FIB Giornaliero", "w-[100px]"], ["STOXX frame bassi", "w-[130px]"], ["STOXX giornaliero", "w-[125px]"], ["No PREZZI", "w-[81px]"], ["ANNUALE Indici", "w-[114px]"]];

function Tabs() {
  return (
    <div className="h-[19px] flex bg-[#f0f0f0] border-t border-black shrink-0 font-['Liberation_Sans',sans-serif] text-[12px] text-black">
      <div className="flex w-[69px] h-[17px] shrink-0">
        {["M7 3v8M11 3L8 7l3 4z", "M10 3L6 7l4 4z", "M6 3l4 4-4 4z", "M11 3v8M7 3l3 4-3 4z"].map((d) => (
          <div key={d} className="w-[17px] h-full bg-[#e8e8e8] border border-[#9a9a9a] flex items-center justify-center">
            <svg viewBox="0 0 16 14" className="w-[11px] h-[11px]"><path d={d} fill="#666" stroke="#666" /></svg>
          </div>
        ))}
      </div>
      {tabs.map(([t, w], i) => (
        <div key={t} className={`relative h-[17px] flex items-center justify-center shrink-0 ${w}`}>
          {i === 0 && <div className="absolute inset-x-[4px] top-0 bottom-0 bg-white" />}
          <span className="absolute left-[2px] top-0 h-full w-px bg-black skew-x-[20deg]" />
          <span className="absolute right-[2px] top-0 h-full w-px bg-black -skew-x-[20deg]" />
          <span className="absolute inset-x-[5px] bottom-0 h-px bg-black" />
          <span className={`relative whitespace-nowrap ${i === 0 ? "font-bold" : ""}`}>{t}</span>
        </div>
      ))}
    </div>
  );
}

function StatusBar() {
  const cells: [string, string][] = [["Open Psns:", "w-[91px]"], ["DT BP:", "w-[62px]"], ["Purch Pwr:", "w-[87px]"], ["Closed P/L:", "w-[92px]"], ["RT TE:", "w-[61px]"], ["Open P/L:", "w-[85px]"]];
  return (
    <div className="h-[20px] shrink-0 bg-[#f0eeee] flex items-center text-[14px] text-black whitespace-nowrap font-['Liberation_Sans',sans-serif] border-b-2 border-[#5b6a7c] overflow-hidden">
      <span className="pl-[2px] w-[1096px] shrink-0">For Help, press F1</span>
      <span className="w-[47px] shrink-0">Acct:</span>
      {cells.map(([t, w]) => <span key={t} className={`${w} shrink-0 border-l border-[#dcdcdc] pl-[5px]`}>{t}</span>)}
      <span className="w-[92px] shrink-0 border-l border-[#dcdcdc] pl-[5px] text-[#008000]">ORDER BAR</span>
      <span className="w-[66px] shrink-0 text-[#008060] pl-[1px]">MACROS</span>
      <span className="w-[16px] shrink-0 flex justify-center"><span className="block w-[9px] h-[11px] rounded-full bg-[radial-gradient(circle_at_40%_35%,#ff8080,#c00000_60%,#500000)]" /></span>
      <span className="pl-[5px] text-[15px]">28/07/2022 20:00</span>
    </div>
  );
}

export default function App() {
  return (
    <div className="w-[1920px] h-[1080px] flex flex-col overflow-hidden bg-[#f0f0f0]">
      <TitleBar />
      <MenuBar />
      <Toolbar />
      <Chart />
      <ScrollBar />
      <Tabs />
      <StatusBar />
    </div>
  );
}
